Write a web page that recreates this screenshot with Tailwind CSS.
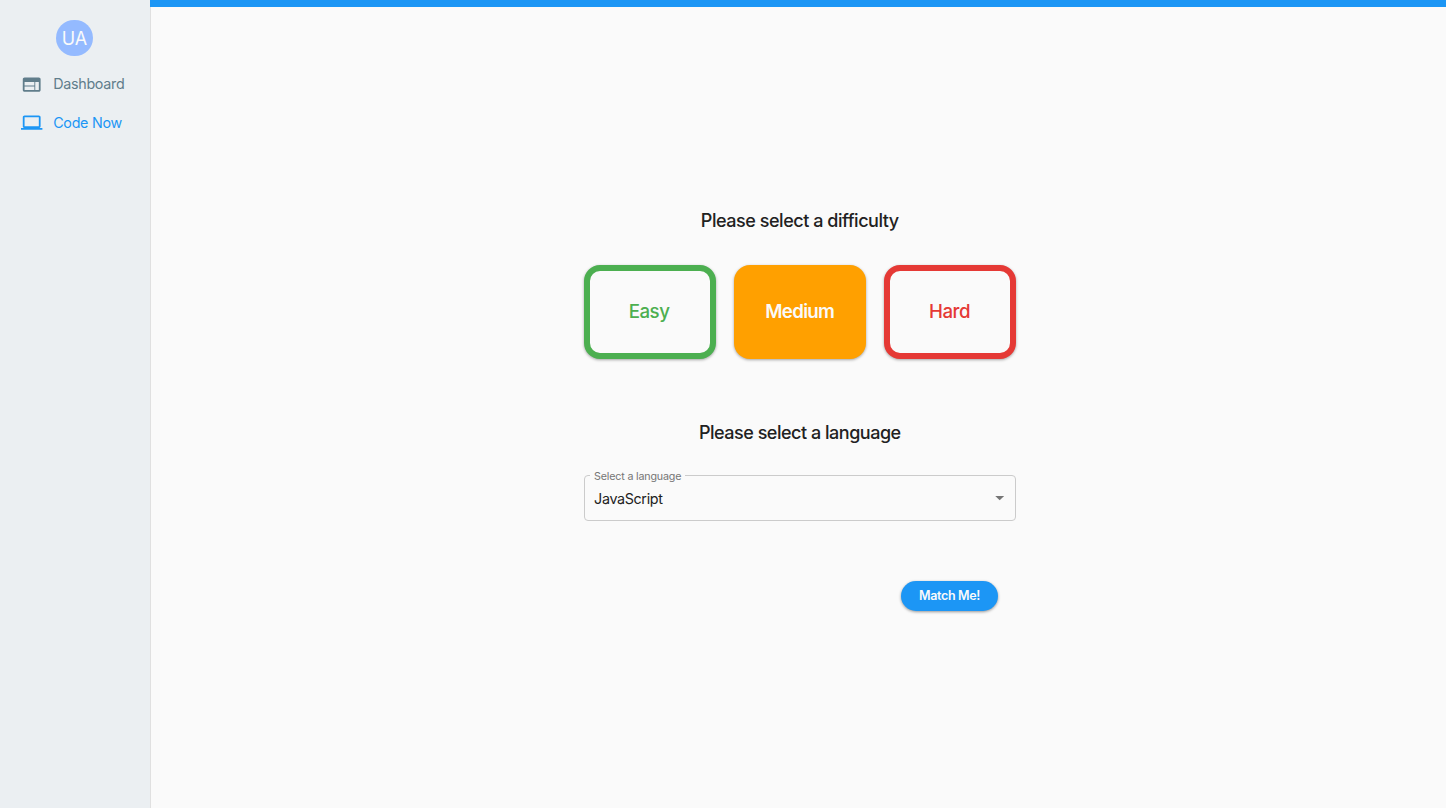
<!DOCTYPE html>
<html lang="en">
<head>
<meta charset="utf-8">
<title>Code Now</title>
<script src="https://cdn.jsdelivr.net/npm/@tailwindcss/browser@4"></script>
</head>
<body class="flex h-screen overflow-hidden bg-[#fafafa] font-['Inter',sans-serif] text-[#212121]">
<aside class="flex h-full w-[151px] shrink-0 flex-col border-r border-[#e0e0e0] bg-[#ebeff2] pt-5">
  <div class="ml-14 flex h-9 w-[37px] items-center justify-center rounded-full bg-[#94baff] pt-px text-[18px] leading-none text-[#fafafa]">UA</div>
  <nav class="mt-[9px] flex flex-col text-[14.3px] leading-none tracking-[-0.28px]">
    <a class="flex h-[38.5px] items-center gap-[10.6px] pl-[21.2px] whitespace-nowrap text-[#607d8b]">
      <svg class="size-[21.4px] fill-current" viewBox="0 0 24 24"><path d="M20 4H4c-1.1 0-1.99.9-1.99 2L2 18c0 1.1.9 2 2 2h16c1.1 0 2-.9 2-2V6c0-1.1-.9-2-2-2zm-5 14H4v-4h11v4zm0-5H4V9h11v4zm5 5h-4V9h4v9z"/></svg>
      <span class="pb-px">Dashboard</span>
    </a>
    <a class="flex h-[38.5px] items-center gap-[10.6px] pl-[21.2px] whitespace-nowrap text-[#1c96f5]">
      <svg class="size-[21.4px] fill-current" viewBox="0 0 24 24"><path d="M20 18c1.1 0 1.99-.9 1.99-2L22 6c0-1.1-.9-2-2-2H4c-1.1 0-2 .9-2 2v10c0 1.1.9 2 2 2H0v2h24v-2h-4zM4 6h16v10H4V6z"/></svg>
      <span>Code Now</span>
    </a>
  </nav>
</aside>
<div class="flex min-w-0 flex-1 flex-col">
  <header class="-ml-px h-[6.5px] shrink-0 bg-[#1c96f5]"></header>
  <main class="ml-[432.6px] flex w-[432.4px] flex-col pt-[202px]">
    <h2 class="text-center text-[18px] leading-6 font-medium tracking-[-0.46px]">Please select a difficulty</h2>
    <div class="mt-[32px] flex justify-between text-[18.7px] font-medium tracking-[-0.5px]">
      <button class="h-[94px] w-[132px] rounded-[16px] border-[6px] border-[#4caf50] bg-[#fafafa] pt-px pr-px text-[#4caf50] shadow-[0_1px_3px_rgba(0,0,0,0.35)]">Easy</button>
      <button class="h-[94px] w-[132px] rounded-[16px] bg-[#ffa000] pt-px font-semibold tracking-[-0.7px] text-[#fafafa] shadow-[0_1px_3px_rgba(0,0,0,0.35)]">Medium</button>
      <button class="h-[94px] w-[132px] rounded-[16px] border-[6px] border-[#e53935] bg-[#fafafa] pt-px pr-px text-[#e53935] shadow-[0_1px_3px_rgba(0,0,0,0.35)]">Hard</button>
    </div>
    <h2 class="mt-[62px] text-center text-[18px] leading-6 font-medium tracking-[-0.48px]">Please select a language</h2>
    <div class="relative mt-[30.5px] flex h-[46px] items-center justify-between rounded-[4px] border border-[#cbcbcb] pr-[4.5px] pl-[9.5px]">
      <span class="absolute -top-[5px] left-[5.5px] bg-[#fafafa] px-1 text-[10.7px] leading-3 tracking-[-0.17px] whitespace-nowrap text-[#757575]">Select a language</span>
      <span class="pt-[1.5px] text-[14.3px] tracking-[-0.34px]">JavaScript</span>
      <svg class="size-[21.4px] fill-[#757575]" viewBox="0 0 24 24"><path d="M7 10l5 5 5-5z"/></svg>
    </div>
    <button class="mt-[59.5px] mr-[18px] h-[30.5px] w-[97px] self-end rounded-full bg-[#1c96f5] pt-[2px] text-[12.5px] font-semibold tracking-[-0.35px] text-[#fafafa] shadow-[0_1px_3px_rgba(0,0,0,0.4)]">Match Me!</button>
  </main>
</div>
</body>
</html>
